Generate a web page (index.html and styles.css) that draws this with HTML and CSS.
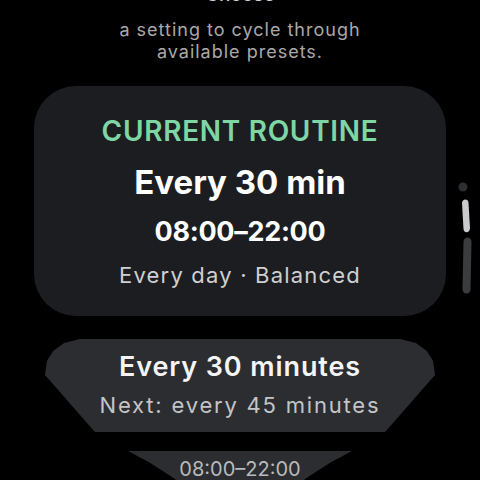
FILE: index.html
```html
<!DOCTYPE html>
<html lang="en">
<head>
  <meta charset="UTF-8">
  <title>Routine presets</title>
  <link rel="stylesheet" href="styles.css">
</head>
<body>
  <div class="screen">
    <div class="title">Choose</div>
    <div class="hint">
      <div class="hint-line">a setting to cycle through</div>
      <div class="hint-line">available presets.</div>
    </div>

    <div class="card">
      <div class="card-label">CURRENT ROUTINE</div>
      <div class="card-title">Every 30 min</div>
      <div class="card-time">08:00–22:00</div>
      <div class="card-meta">Every day · Balanced</div>
    </div>

    <div class="chip">
      <div class="chip-title">Every 30 minutes</div>
      <div class="chip-sub">Next: every 45 minutes</div>
    </div>

    <div class="chip chip-last">
      <div class="chip-peek">08:00–22:00</div>
    </div>

    <!-- scroll position on the right edge -->
    <svg class="scrollbar" width="30" height="130" viewBox="0 0 30 130">
      <circle cx="13" cy="17" r="4.5" fill="#2e2f31"/>
      <path d="M12 33 C12 29 18 28 18.5 33 L20 58 C20 63 14 64 13.5 59 Z" fill="#c9cbcd"/>
      <path d="M13.5 72 C13.5 66 21.5 66 21.5 72 L20.5 119 C20.5 125 12.5 125 12.5 119 Z" fill="#3b3c3e"/>
    </svg>
  </div>
</body>
</html>
```

FILE: styles.css
```css
body {
  margin: 0;
  background-color: #000;
  font-family: Inter, Roboto, sans-serif;
}

.screen {
  position: relative;
  width: 480px;
  height: 480px;
  overflow: hidden;
  display: flex;
  flex-direction: column;
  align-items: center;
}

.title {
  margin-top: -16px;
  font-size: 19px;
  line-height: 22px;
  font-weight: 500;
  color: #cfcfcf;
}

/* hint text, the long line gets cut by the round edge */
.hint {
  margin-top: 13px;
  display: flex;
  flex-direction: column;
  align-items: center;
}
.hint-line {
  max-width: 242px;
  display: flex;
  justify-content: center;
  overflow: hidden;
  white-space: nowrap;
  font-size: 18px;
  line-height: 22px;
  letter-spacing: 1px;
  color: #a9a9a9;
}

.card {
  box-sizing: border-box;
  width: 412px;
  margin-top: 23px;
  padding: 28px 0 27px;
  border-radius: 42px;
  background-color: #1c1d20;
  display: flex;
  flex-direction: column;
  align-items: center;
}
.card-label {
  font-size: 28px;
  line-height: 34px;
  font-weight: 600;
  letter-spacing: 0.7px;
  color: #7fd6a5;
}
.card-title {
  margin-top: 14px;
  font-size: 33px;
  line-height: 40px;
  font-weight: 700;
  color: #fff;
}
.card-time {
  margin-top: 13px;
  font-size: 27px;
  line-height: 34px;
  font-weight: 700;
  letter-spacing: -0.3px;
  color: #fff;
}
.card-meta {
  margin-top: 12px;
  font-size: 22px;
  line-height: 28px;
  letter-spacing: 1.2px;
  color: #cfd0d2;
}

/* list items bend away at the round edge */
.chip {
  box-sizing: border-box;
  width: 390px;
  margin-top: 23px;
  padding: 12px 0 13px;
  background-color: #2b2d30;
  display: flex;
  flex-direction: column;
  align-items: center;
  flex-shrink: 0;
  clip-path: polygon(9% 0, 91% 0, 95.1% 4.3%, 97.9% 12.9%, 99.5% 23.7%, 100% 38.7%, 87.2% 100%, 12.8% 100%, 0 38.7%, 0.5% 23.7%, 2.1% 12.9%, 4.9% 4.3%);
}
.chip-title {
  font-size: 27px;
  line-height: 32px;
  font-weight: 600;
  letter-spacing: 0.9px;
  color: #f4f4f4;
}
.chip-sub {
  margin-top: 8px;
  font-size: 22px;
  line-height: 28px;
  letter-spacing: 1.8px;
  color: #c4c5c7;
}

.chip-last {
  width: 224px;
  height: 50px;
  margin-top: 19px;
  padding: 5px 0 0;
  clip-path: polygon(0 0, 100% 0, 90% 24%, 79% 56%, 70% 100%, 30% 100%, 21% 56%, 10% 24%);
}
.chip-peek {
  font-size: 20px;
  line-height: 26px;
  color: #b9babc;
}

.scrollbar {
  position: absolute;
  top: 170px;
  right: 0;
}
```
